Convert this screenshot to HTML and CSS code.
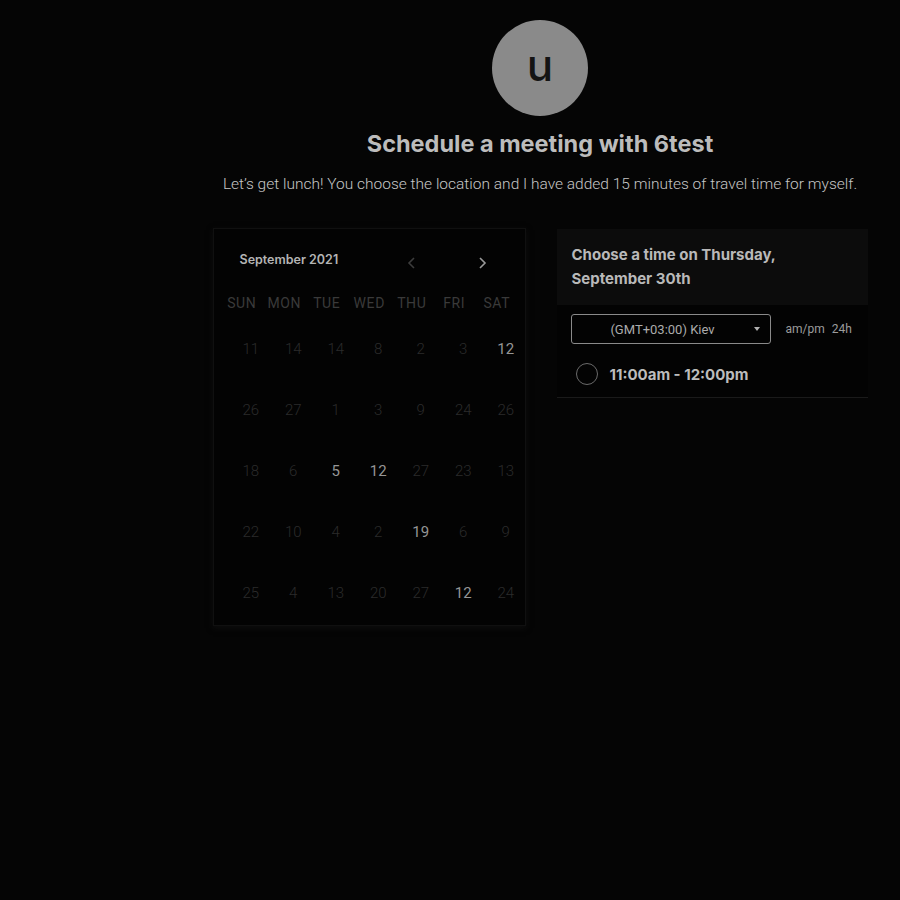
FILE: index.html
```html
<!DOCTYPE html>
<html>
<head>
<meta charset="utf-8">
<link rel="stylesheet" href="styles.css">
</head>
<body>
<div class="page">
  <div class="avatar">u</div>
  <h1 class="title">Schedule a meeting with 6test</h1>
  <p class="subtitle">Let’s get lunch! You choose the location and I have added 15 minutes of travel time for myself.</p>
  <div class="cards">
    <div class="calendar">
      <div class="cal-head">
        <span class="month">September 2021</span>
        <div class="nav">
          <svg class="chev dim" width="12" height="14" viewBox="0 0 12 14"><path d="M8 2 L3 7 L8 12" fill="none" stroke="currentColor" stroke-width="1.6"/></svg>
          <svg class="chev" width="12" height="14" viewBox="0 0 12 14"><path d="M4 2 L9 7 L4 12" fill="none" stroke="currentColor" stroke-width="1.6"/></svg>
        </div>
      </div>
      <div class="weekdays">
        <span>SUN</span><span>MON</span><span>TUE</span><span>WED</span><span>THU</span><span>FRI</span><span>SAT</span>
      </div>
      <div class="days">
        <span>11</span><span>14</span><span>14</span><span>8</span><span>2</span><span>3</span><span class="on">12</span>
        <span>26</span><span>27</span><span>1</span><span>3</span><span>9</span><span>24</span><span>26</span>
        <span>18</span><span>6</span><span class="on">5</span><span class="on">12</span><span>27</span><span>23</span><span>13</span>
        <span>22</span><span>10</span><span>4</span><span>2</span><span class="on">19</span><span>6</span><span>9</span>
        <span>25</span><span>4</span><span>13</span><span>20</span><span>27</span><span class="on">12</span><span>24</span>
      </div>
    </div>
    <div class="times">
      <div class="times-head">Choose a time on Thursday, September 30th</div>
      <div class="controls">
        <div class="select">
          <span class="select-text">(GMT+03:00) Kiev</span>
          <span class="caret"></span>
        </div>
        <div class="fmt"><span>am/pm</span><span>24h</span></div>
      </div>
      <div class="slot">
        <span class="radio"></span>
        <span class="slot-text">11:00am - 12:00pm</span>
      </div>
    </div>
  </div>
</div>
</body>
</html>
```
FILE: styles.css
```css
html, body {
  margin: 0;
  padding: 0;
  background: #050505;
  height: 100%;
}
body {
  font-family: Roboto, "Liberation Sans", sans-serif;
}
.page {
  padding-left: 180px;
  display: flex;
  flex-direction: column;
  align-items: center;
}
.avatar {
  margin-top: 20px;
  width: 96px;
  height: 96px;
  border-radius: 50%;
  background: #8a8a8a;
  color: #141414;
  font-family: Inter, sans-serif;
  font-size: 44px;
  font-weight: 500;
  display: flex;
  align-items: center;
  justify-content: center;
  line-height: 1;
  padding-bottom: 6px;
  box-sizing: border-box;
}
.title {
  margin: 14px 0 0;
  font-family: Inter, sans-serif;
  font-weight: 700;
  font-size: 23.5px;
  line-height: 28px;
  color: #bcbcbc;
}
.subtitle {
  margin: 16px 0 0;
  font-size: 15.5px;
  line-height: 20px;
  font-weight: 300;
  color: #c6c6c6;
}
.cards {
  margin-top: 34px;
  display: flex;
  gap: 31px;
  align-items: flex-start;
}
.calendar {
  width: 313px;
  box-sizing: border-box;
  background: #030303;
  border: 1px solid #101010;
  box-shadow: 0 2px 6px rgba(16,16,16,0.8);
  padding: 0 7px 2px;
}
.cal-head {
  height: 60px;
  display: flex;
  align-items: center;
  padding: 0 30px 0 19px;
}
.month {
  font-family: Inter, sans-serif;
  font-weight: 600;
  font-size: 12.5px;
  color: #b4b4b4;
}
.nav {
  margin-left: auto;
  display: flex;
  gap: 58px;
  padding-top: 8px;
}
.chev { color: #9a9a9a; display: block; }
.chev.dim { color: #3c3c3c; }
.weekdays {
  margin-top: 2px;
  display: grid;
  grid-template-columns: repeat(7, 42.5px);
  height: 24px;
  align-items: center;
}
.weekdays span {
  text-align: center;
  font-size: 14px;
  letter-spacing: 0.6px;
  color: #3a3a3a;
}
.days {
  margin-top: 3px;
  display: grid;
  grid-template-columns: repeat(7, 42.5px);
  grid-auto-rows: 61px;
  align-items: center;
}
.days span {
  text-align: center;
  padding-left: 18px;
  font-size: 15px;
  font-weight: 300;
  color: #2b2b2b;
}
.days span.on {
  color: #959595;
  font-weight: 400;
}
.times {
  width: 311px;
  background: #030303;
  border-bottom: 1px solid #1a1a1a;
  margin-top: 1px;
  padding-bottom: 12px;
}
.times-head {
  background: #0c0c0c;
  padding: 14px 50px 14px 15px;
  font-family: Inter, sans-serif;
  font-weight: 700;
  font-size: 15px;
  line-height: 24px;
  color: #b9b9b9;
}
.controls {
  display: flex;
  align-items: center;
  margin-top: 9px;
  padding-left: 14px;
}
.select {
  width: 200px;
  height: 30px;
  box-sizing: border-box;
  border: 1px solid #8a8a8a;
  border-radius: 3px;
  display: flex;
  align-items: center;
  padding: 0 10px 0 0;
}
.select-text {
  flex: 1;
  text-align: center;
  font-size: 13px;
  color: #ababab;
  padding-left: 0;
}
.caret {
  width: 0;
  height: 0;
  border-left: 3.5px solid transparent;
  border-right: 3.5px solid transparent;
  border-top: 4px solid #b0b0b0;
}
.fmt {
  margin-left: 15px;
  display: flex;
  gap: 7px;
  font-size: 12px;
  color: #9c9c9c;
}
.slot {
  display: flex;
  align-items: center;
  margin-top: 19px;
  padding-left: 19px;
}
.radio {
  width: 22px;
  height: 22px;
  box-sizing: border-box;
  border: 1.5px solid #6a6a6a;
  border-radius: 50%;
}
.slot-text {
  margin-left: 12px;
  font-family: Inter, sans-serif;
  font-weight: 700;
  font-size: 15px;
  color: #bcbcbc;
}
```
